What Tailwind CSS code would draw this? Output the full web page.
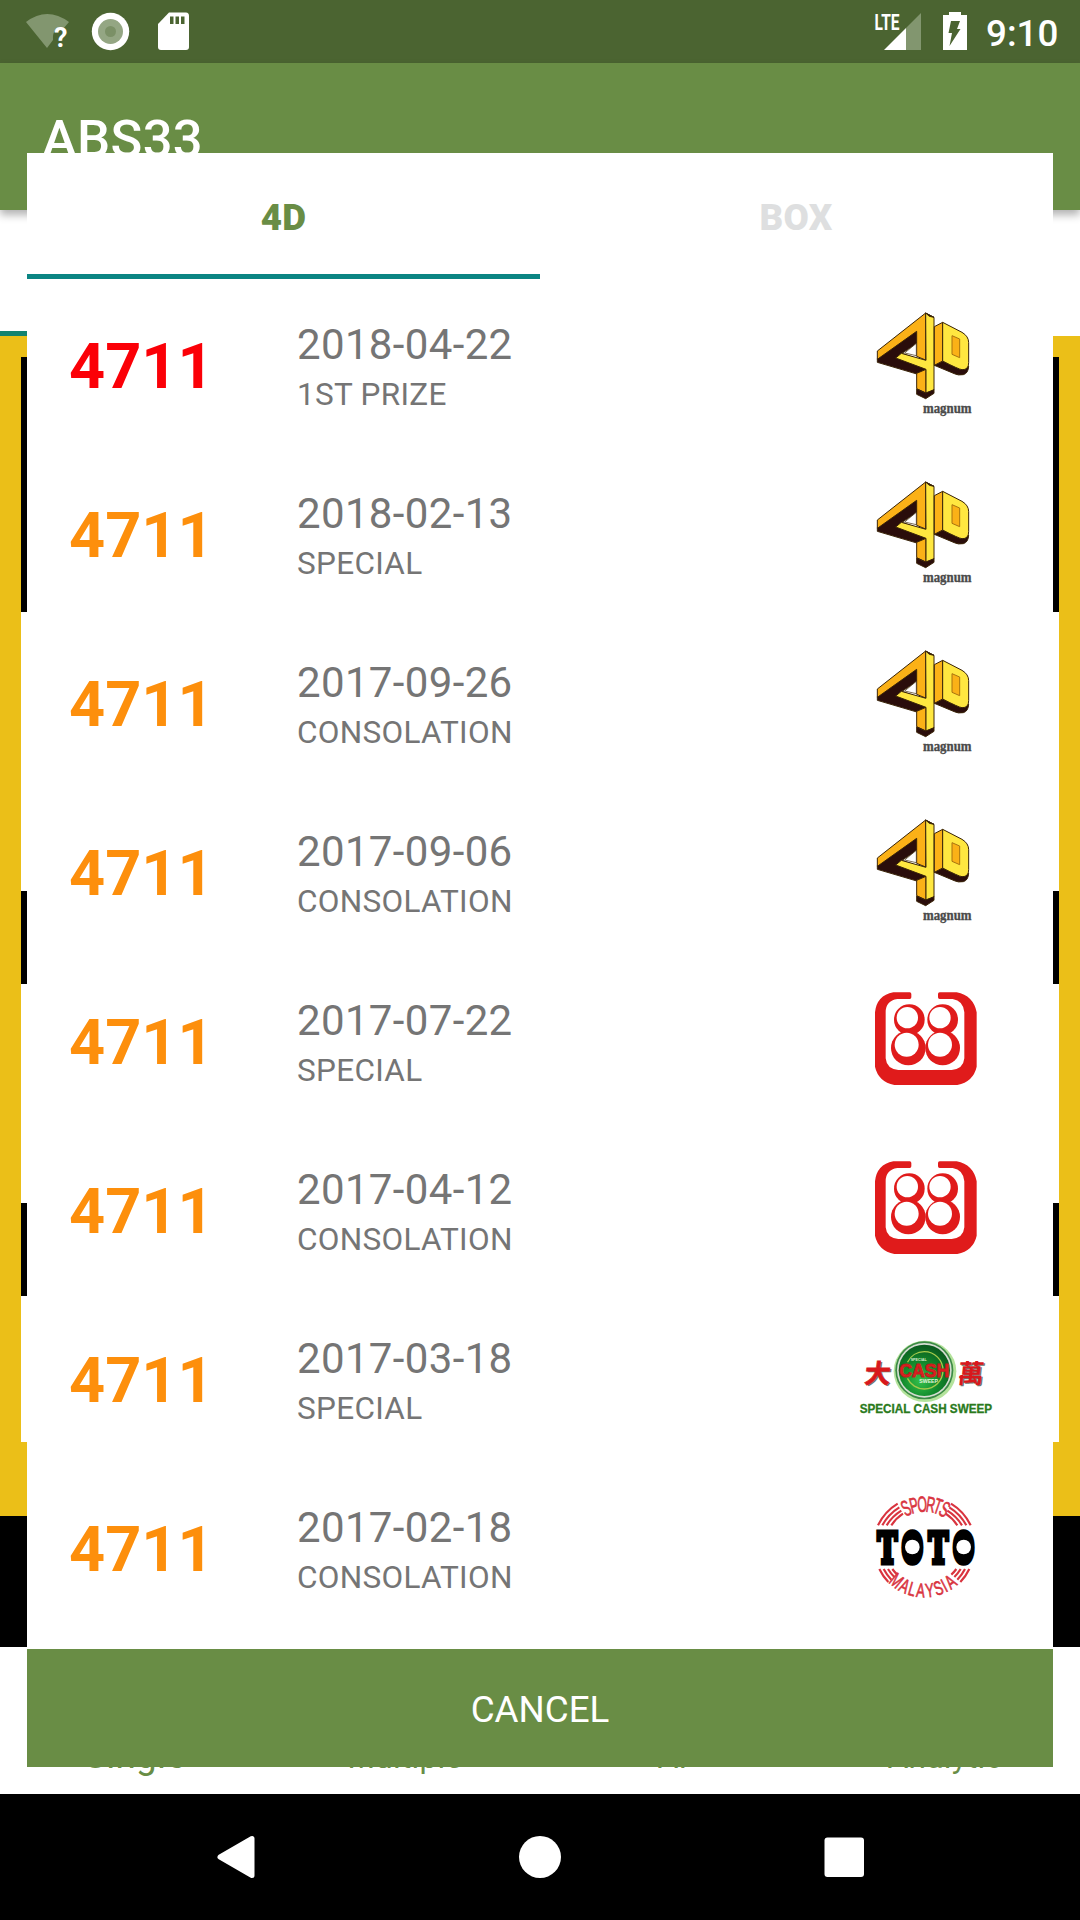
<!DOCTYPE html>
<html lang="en">
<head>
  <meta charset="UTF-8" />
  <meta name="viewport" content="width=device-width, initial-scale=1.0"/>
  <title>ABS33</title>
  <script src="https://cdn.jsdelivr.net/npm/@tailwindcss/browser@4"></script>
</head>
<body class="bg-white font-['Roboto',sans-serif]">
  <!-- Logo artwork -->
  <svg class="absolute w-0 h-0">
    <symbol id="magnum" viewBox="0 0 540 420">
      <g stroke="#3a2408" stroke-width="3" stroke-linejoin="round">
        <path fill="#2a0d0b" d="M112 206L234 120V158L186 190L258 216V242L244 256L112 217Z"/>
        <path fill="#fbb117" d="M112 183L257 69V210L230 199V124L112 208Z"/>
        <path fill="#fefefe" stroke-width="2" d="M194 189L229 160V197Z"/>
        <path fill="#fbb117" d="M230 250L258 238V309L230 296Z"/>
        <path fill="#ffe740" d="M257 69L282 82V300L258 310V238L167 204L184 190L258 211Z"/>
        <path fill="#2a0d0b" d="M257 69L282 82L268 79Z"/>
        <path fill="#2a0d0b" d="M230 297L257 309L282 299V310L257 326L230 313Z"/>
        <path fill="#2a0d0b" d="M283 226L308 213L360 238L386 228Q385 250 370 254Q354 257 343 251Z"/>
        <path fill="#fbb117" d="M283 110L308 97V213L283 226Z"/>
        <path fill="#ffe740" d="M308 97L366 127Q386 139 386 158V218Q386 240 366 239Q356 238 308 213Z"/>
        <path fill="#fbb117" stroke="#a87310" d="M336 137L359 147V203L336 193Z"/>
      </g>
      <text transform="translate(249 369) scale(0.940 1)" class="font-['Liberation_Serif',serif] font-bold text-[41px]" fill="#4a4a4a" stroke="#4a4a4a">magnum</text>
    </symbol>
    <symbol id="damacai" viewBox="0 0 540 420">
      <g transform="translate(0 12)" fill="#e01b1b">
        <path d="M209 67Q214 67 214 72V82Q214 87 209 87H172Q137 92 137 127V265Q140 297 175 300H335Q370 297 373 265V127Q370 92 338 87H299Q294 87 294 82V72Q294 67 299 67H350Q400 77 410 127V290Q400 335 352 345H163Q115 335 105 290V127Q110 77 160 67Z"/>
        <circle cx="208" cy="149" r="46"/>
        <circle cx="308" cy="149" r="46"/>
        <circle cx="205" cy="234" r="52"/>
        <circle cx="308" cy="234" r="52"/>
        <g fill="#fff">
          <circle cx="202" cy="143" r="32"/>
          <circle cx="300" cy="143" r="32"/>
          <circle cx="200" cy="224" r="36"/>
          <circle cx="300" cy="224" r="36"/>
        </g>
      </g>
    </symbol>
    <symbol id="cashsweep" viewBox="0 0 540 420">
      <g transform="translate(0 48)">
        <ellipse cx="255" cy="154" rx="94" ry="92" fill="#b4e39c"/>
        <circle cx="253" cy="151" r="87" fill="#3b8a45"/>
        <circle cx="253" cy="151" r="82" fill="#d5ddd2"/>
        <circle cx="253" cy="151" r="77" fill="url(#ball)"/>
        <circle cx="253" cy="151" r="56" fill="none" stroke="#a5c94c" stroke-width="4" stroke-dasharray="150 50"/>
        <text x="212" y="122" textLength="48" lengthAdjust="spacingAndGlyphs" class="font-['Liberation_Sans',sans-serif] font-bold text-[11px]" fill="#d8ecd0">SPECIAL</text>
        <text x="178" y="171" textLength="150" lengthAdjust="spacingAndGlyphs" class="font-['Liberation_Sans',sans-serif] font-bold text-[57px]" fill="#e02022" stroke="#c01c1a" stroke-width="3">CASH</text>
        <text x="238" y="190" textLength="56" lengthAdjust="spacingAndGlyphs" class="font-['Liberation_Sans',sans-serif] font-bold text-[14px]" fill="#e4f2dc">SWEEP</text>
        <g class="font-['Noto_Sans_CJK_TC',sans-serif] font-bold text-[78px]">
          <text transform="translate(76 191) skewX(-6)" fill="#6d786f">大</text>
          <text transform="translate(355 191) skewX(-6)" fill="#6d786f">萬</text>
          <text transform="translate(71 188) skewX(-6)" fill="#d8181c" stroke="#d8181c" stroke-width="2">大</text>
          <text transform="translate(351 188) skewX(-6)" fill="#d8181c">萬</text>
        </g>
        <text transform="translate(59 280) scale(0.920 1)" textLength="432" lengthAdjust="spacingAndGlyphs" class="font-['Liberation_Sans',sans-serif] font-bold text-[38px]" fill="#2a7a1c" stroke="#2a7a1c">SPECIAL CASH SWEEP</text>
      </g>
    </symbol>
    <symbol id="toto" viewBox="0 0 540 420">
      <g transform="translate(0 21)">
        <use href="#stripes"/>
        <use href="#stripes" transform="translate(506 0) scale(-1 1)"/>
        <!-- Lettering around the ring -->
        <g transform="translate(253 202)" fill="#d9343f" stroke="#d9343f" stroke-width="2" text-anchor="middle" class="font-['Liberation_Sans',sans-serif]">
          <g class="text-[66px]">
            <text transform="rotate(-25) scale(0.560 1)" y="-107">S</text>
            <text transform="rotate(-14) scale(0.560 1)" y="-107">P</text>
            <text transform="rotate(-3) scale(0.560 1)" y="-107">O</text>
            <text transform="rotate(8.500) scale(0.560 1)" y="-107">R</text>
            <text transform="rotate(18.500) scale(0.560 1)" y="-107">T</text>
            <text transform="rotate(28) scale(0.560 1)" y="-107">S</text>
          </g>
          <g class="text-[59px]">
            <text transform="rotate(40) scale(0.660 1)" y="150">M</text>
            <text transform="rotate(27) scale(0.660 1)" y="150">A</text>
            <text transform="rotate(16) scale(0.660 1)" y="150">L</text>
            <text transform="rotate(5) scale(0.660 1)" y="150">A</text>
            <text transform="rotate(-7) scale(0.660 1)" y="150">Y</text>
            <text transform="rotate(-19) scale(0.660 1)" y="150">S</text>
            <text transform="rotate(-27.500) scale(0.660 1)" y="150">I</text>
            <text transform="rotate(-37) scale(0.660 1)" y="150">A</text>
          </g>
        </g>
        <g fill="#000" stroke="#000" text-anchor="middle" class="font-['DejaVu_Serif',serif] font-bold">
          <g stroke-width="15" class="text-[128px]">
            <text transform="translate(142 249) scale(0.620 1)">T</text>
            <text transform="translate(295 249) scale(0.620 1)">T</text>
          </g>
          <g stroke-width="20" class="text-[120px]">
            <text transform="translate(217 246) scale(0.580 1)">O</text>
            <text transform="translate(371 246) scale(0.580 1)">O</text>
          </g>
        </g>
        <g fill="#000">
          <ellipse cx="217" cy="201" rx="28" ry="42"/>
          <ellipse cx="371" cy="201" rx="28" ry="42"/>
        </g>
        <circle cx="217" cy="201" r="22" fill="#fff"/>
        <circle cx="371" cy="201" r="22" fill="#fff"/>
      </g>
    </symbol>
    <defs>
      <radialGradient id="ball" cx="0.42" cy="0.7" r="0.7">
        <stop offset="0" stop-color="#35c04a"/>
        <stop offset="0.5" stop-color="#128a2c"/>
        <stop offset="1" stop-color="#0a5a1e"/>
      </radialGradient>
      <g id="stripes" fill="none" stroke="#d9343f" stroke-width="6.500">
        <path d="M114 136A154 154 0 0 1 173 71M127 136A143 143 0 0 1 178 82M140 136A132 132 0 0 1 184 92M154 136A121 121 0 0 1 189 101"/>
        <path d="M118 267A150 150 0 0 0 145 306M131 267A139 139 0 0 0 154 299M144 267A128 128 0 0 0 163 291M157 267A117 117 0 0 0 172 284"/>
      </g>
    </defs>
  </svg>

  <div class="relative w-[1080px] h-[1920px] overflow-hidden flex flex-col">
    <!-- Status bar -->
    <header class="h-[63px] shrink-0 bg-[#4b6431] flex">
      <svg class="w-[200px] h-[63px]" viewBox="0 0 200 63">
        <path fill="#82966f" d="M26 22Q47 6 69 22L63 29Q52 27 53 40L47 48Z"/>
        <text x="54" y="47" class="font-bold text-[27px]" fill="#fff">?</text>
        <circle cx="110.500" cy="31.500" r="18.700" fill="#fff"/>
        <circle cx="110.500" cy="31.500" r="12.500" fill="#94a683"/>
        <circle cx="110.500" cy="31.500" r="5.500" fill="#7b9066"/>
        <path fill="#fff" d="M169 12.500H186Q189 12.500 189 16V47Q189 50 186 50H161Q158 50 158 47V24Z"/>
        <path fill="#4b6431" d="M170 16.500h3.500v7.500H170zM175.500 16.500h3.500v7.500h-3.500zM181 16.500h3.500v7.500H181z"/>
      </svg>
      <svg class="w-[110px] h-[63px] ml-auto" viewBox="870 0 110 63">
        <text x="874.500" y="29.500" textLength="25" lengthAdjust="spacingAndGlyphs" class="font-bold text-[22px]" fill="#fff">LTE</text>
        <path fill="#82966f" d="M921 13V50H906V28Z"/>
        <path fill="#fff" d="M906 28V50H884Z"/>
        <path fill="#fff" d="M949 12H961V15H967V50H943V15H949Z"/>
        <path fill="#4b6431" d="M951 21H960L957 29H960.500L949.500 46L952 33H948.500Z"/>
      </svg>
      <span class="w-[100px] pl-[6px] font-medium text-[36.750px] leading-[68px] text-white">9:10</span>
    </header>

    <!-- App bar -->
    <div class="relative z-10 h-[147px] shrink-0 bg-[#698d45] pl-[42px] shadow-[0_5px_8px_rgba(0,0,0,0.3)]">
      <h1 class="pt-[39px] font-medium text-[52.500px] leading-[74px] tracking-[0.3px] text-white">ABS33</h1>
    </div>
    <div class="h-[126px] shrink-0 flex items-end">
      <div class="w-1/2 h-[5px] bg-[#12836f]"></div>
    </div>

    <!-- Page content -->
    <main class="h-[1180px] shrink-0 bg-[#ebbf18] px-[21px] pt-[21px]">
      <div class="h-[1085px] bg-white">
        <div class="h-[255px] bg-black"></div>
        <div class="h-[93px] mt-[279px] bg-black"></div>
        <div class="h-[93px] mt-[219px] bg-black"></div>
      </div>
    </main>
    <div class="h-[131px] shrink-0 bg-black"></div>

    <!-- Bottom menu -->
    <nav class="h-[147px] shrink-0 grid grid-cols-4 items-baseline text-center text-[31.500px] leading-[40px] tracking-[0.3px] text-[#698d45] pt-[89px]">
      <span class="text-[36.750px]">Single</span>
      <span>Multiple</span>
      <span class="pr-[5px]">AI</span>
      <span>Analytic</span>
    </nav>

    <!-- System navigation -->
    <footer class="h-[126px] shrink-0 bg-black">
      <svg class="w-full h-full" viewBox="0 1794 1080 126" fill="#fff">
        <path stroke="#fff" stroke-width="5" stroke-linejoin="round" d="M220 1857L252 1838.500V1875.500Z"/>
        <circle cx="540" cy="1857" r="21"/>
        <rect x="824.500" y="1837.500" width="39.500" height="39.500" rx="3"/>
      </svg>
    </footer>

    <!-- Results dialog -->
    <section class="absolute z-20 left-[27px] top-[153px] w-[1026px] h-[1614px] bg-white flex flex-col">
      <div class="h-[126px] shrink-0 grid grid-cols-2 text-center font-black text-[36.750px] leading-[130px] tracking-[0.3px]">
        <div class="h-[126px] border-b-[5px] border-[#0b8583] text-[#698d45]">4D</div>
        <div class="h-[126px] pr-px text-[#dedfe0]">BOX</div>
      </div>
      <ul id="results" class="flex-1"></ul>
      <button class="h-[118px] shrink-0 bg-[#698d45] pt-[3px] text-white text-[36.750px]">CANCEL</button>
    </section>
  </div>

  <script>
    const results = [
      ["2018-04-22", "1ST PRIZE", "magnum"],
      ["2018-02-13", "SPECIAL", "magnum"],
      ["2017-09-26", "CONSOLATION", "magnum"],
      ["2017-09-06", "CONSOLATION", "magnum"],
      ["2017-07-22", "SPECIAL", "damacai"],
      ["2017-04-12", "CONSOLATION", "damacai"],
      ["2017-03-18", "SPECIAL", "cashsweep"],
      ["2017-02-18", "CONSOLATION", "toto"],
    ];

    document.getElementById("results").innerHTML = results.map(([date, prize, logo]) => `
      <li class="h-[169px] flex">
        <div class="w-[228px] pl-[42px] pt-[50px] font-bold text-[63px] leading-[75px] ${prize === "1ST PRIZE" ? "text-[#fb0007]" : "text-[#fd8f0c]"}">4711</div>
        <div class="flex-1 pl-[42px] pt-[41px] text-[#757575]">
          <div class="text-[42px] leading-[50px] tracking-[0.35px]">${date}</div>
          <div class="text-[31.500px] leading-[49px] tracking-[0.3px]">${prize}</div>
        </div>
        <svg class="w-[180px] h-[140px] mt-[11px] mr-[33px]"><use href="#${logo}"/></svg>
      </li>`).join("");
  </script>
</body>
</html>
